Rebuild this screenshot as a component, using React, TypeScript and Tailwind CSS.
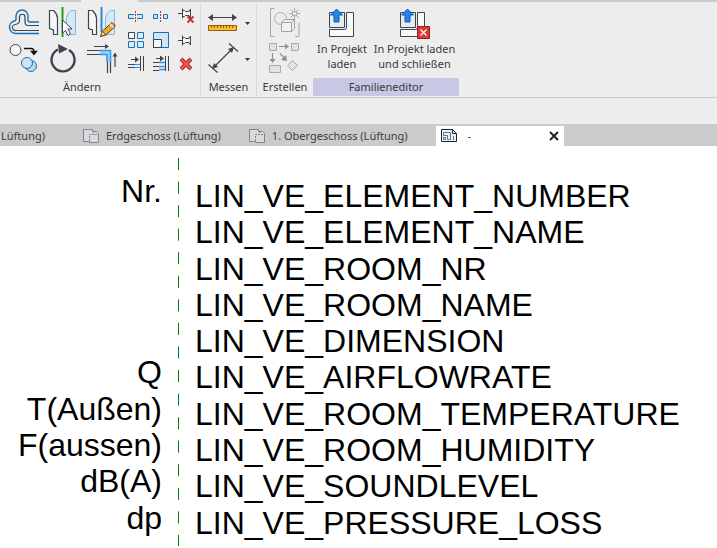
import type { ReactNode } from 'react';

type IconProps = { box: string; w: number; h: number; children: ReactNode };

const dark = '#3b4450';
const blue = '#1a6fb5';

function Icon({ box, w, h, children }: IconProps) {
  return (
    <svg viewBox={box} width={w} height={h} fill="none" aria-hidden="true">
      {children}
    </svg>
  );
}

function BigTool({ label, box, children }: { label: string; box: string; children: ReactNode }) {
  return (
    <button type="button" aria-label={label} className="h-9 w-[39px]">
      <Icon box={box} w={39} h={36}>{children}</Icon>
    </button>
  );
}

function SmallTool({ label, box, children }: { label: string; box: string; children: ReactNode }) {
  return (
    <button type="button" aria-label={label} className="h-6 w-[25px]">
      <Icon box={box} w={25} h={24}>{children}</Icon>
    </button>
  );
}

function Plates() {
  return (
    <>
      <path d="M6.5 6.500h4q3.500 3 4 7.500v16.500h-4v-4.500l-4-1.500z" fill="#f6f7f8" stroke={dark} strokeWidth="1.200" />
      <path d="M32.5 6.500h-4.500q-4 3-4.500 7.500v16.500h9z" fill="#d5e9f5" stroke="#85b9dc" />
    </>
  );
}

function ModifyPanel() {
  return (
    <section className="flex w-[200px] shrink-0 flex-col">
      <div className="flex pl-1">
        <div className="grid grid-cols-3">
          <BigTool label="Versatz" box="4 4 39 36">
            <path d="M39 22H30Q28 22 28 20V16A6 6 0 0 0 16 16V19Q16 21 14 21A6.400 6.400 0 0 0 16 33.500H39" stroke={blue} strokeWidth="1.400" />
            <path d="M39 25.500H28Q25 25.500 25 22V17A2.700 2.700 0 0 0 19.500 17V21Q19 24 15 24.500A3 3 0 0 0 16 30.500H39" stroke={dark} strokeWidth="1.200" />
          </BigTool>
          <BigTool label="Spiegeln - Achse wählen" box="0 0 39 36">
            <Plates />
            <path d="M19.500 3v30" stroke="#2a9d1c" strokeWidth="2" />
            <path d="M19.500 16v13l3-2.500 2.500 5 2.500-1.500-2.500-5h4z" fill="#fff" stroke={dark} />
          </BigTool>
          <BigTool label="Spiegeln - Achse zeichnen" box="0 0 39 36">
            <Plates />
            <path d="M19.500 3v25" stroke="#3585d0" strokeWidth="2" />
            <path d="M18.500 32.500l2-5.500 9.500-8.500 3.500 3.500-9.500 9z" fill="#f5a81f" stroke="#5a3a18" />
            <path d="M28 20l3.500 3.500" stroke="#f7e6d4" strokeWidth="1.500" />
            <path d="M18.500 32.500l2-5 3 3z" fill="#fbe9cc" stroke="#5a3a18" strokeWidth="0.800" />
          </BigTool>
          <BigTool label="Kopieren" box="4 40 39 36">
            <circle cx="15.500" cy="50" r="5.500" fill="#f7f7f7" stroke={dark} />
            <path d="M24 48.500h7q3 0 3 3v2M31.500 51.500l2.500 3 2.500-3z" stroke="#111" strokeWidth="1.300" />
            <circle cx="31" cy="66" r="5.500" fill="#b8daf1" stroke={blue} />
            <circle cx="27" cy="63" r="5.500" fill="#c9e4f6" stroke={blue} />
          </BigTool>
          <BigTool label="Drehen" box="43 40 39 36">
            <path d="M69 50A11.500 11.500 0 1 1 58 49.500" stroke={dark} strokeWidth="2.400" />
            <path d="M58 44l10 5-9 4.500z" fill={dark} />
          </BigTool>
          <BigTool label="Stutzen/Dehnen auf Ecke" box="82 40 39 36">
            <path d="M94 46.500h12M115 67V55" stroke={dark} strokeWidth="1.200" />
            <path d="M109 46.500l-4-2.500v5zM115 52.500l-2.500 4h5z" fill={dark} />
            <path d="M87 50.500h13M87 54.500h13M107.500 60v13M110.500 60v13" stroke={dark} strokeWidth="1.200" />
            <path d="M99.500 50.500h11V62h-3.500V54.500h-7.500z" fill="#9fd0f8" />
            <path d="M99.500 50.500h11V62M99.500 54.500h7.500V62" stroke="#3096ed" strokeWidth="1.500" />
          </BigTool>
        </div>
        <div className="ml-0.5 grid grid-cols-3">
          <SmallTool label="Element teilen" box="123 5 25 24">
            <path d="M128.500 15.500h14v4h-14z" fill="#cde7f7" stroke={blue} />
            <path d="M135.500 12v11" stroke="#ededed" strokeWidth="3" />
            <path d="M135.500 12v11" stroke="#b93a34" strokeDasharray="2 1" />
          </SmallTool>
          <SmallTool label="Mit Abstand teilen" box="148 5 25 24">
            <path d="M153.500 15.500h4v4h-4zM163.500 15.500h4v4h-4z" fill="#cde7f7" stroke={blue} />
            <path d="M160.500 12v11" stroke="#b93a34" strokeDasharray="2 1" />
          </SmallTool>
          <SmallTool label="Loslösen" box="173 5 25 24">
            <path d="M178 14.500h4M182.500 9.500v10M182.500 11.500h2l1 1h3.500l1.500-2.500v9l-1.500-2.500h-3.500l-1 1h-2" fill="#f4f4f4" stroke={dark} />
            <path d="M187.500 17.500l6 6M193.500 17.500l-6 6" stroke="#cb2b26" strokeWidth="1.800" />
          </SmallTool>
          <SmallTool label="Reihe" box="123 29 25 24">
            <path d="M128.500 33.500h6v6h-6z" fill="#f7f7f7" stroke={dark} />
            <path d="M137.500 33.500h6v6h-6zM128.500 42.500h6v6h-6zM137.500 42.500h6v6h-6z" fill="#dceefa" stroke={blue} />
          </SmallTool>
          <SmallTool label="Skalieren" box="148 29 25 24">
            <path d="M153.500 33.500h15v15h-15z" fill="#cde7f7" stroke={blue} />
            <path d="M153.500 40.500h8v8h-8z" fill="#f7f7f7" stroke={dark} />
          </SmallTool>
          <SmallTool label="Fixieren" box="173 29 25 24">
            <path d="M178 41.500h4M182.500 36.500v10M182.500 38.500h2l1 1h3.500l1.500-2.500v9l-1.500-2.500h-3.500l-1 1h-2" fill="#f4f4f4" stroke={dark} />
          </SmallTool>
          <SmallTool label="Einzelnes Element dehnen" box="123 53 25 24">
            <path d="M131 60.500h5M128 65.500h8M128 68.500h8M140.500 57v15M143.500 57v15" stroke={dark} />
            <path d="M139 60.500l-4-3v6z" fill={dark} />
            <path d="M135 65.500h5M135 68.500h5" stroke="#3096ed" />
          </SmallTool>
          <SmallTool label="Mehrere Elemente dehnen" box="148 53 25 24">
            <path d="M156 59.500h5M153 63.500h6M153 67.500h6M153 71.500h6M165.500 57v15M168.500 57v15" stroke={dark} />
            <path d="M164 59.500l-4-3v6z" fill={dark} />
            <path d="M159 63.500h6M159 67.500h6M159 70.500h6" stroke="#3096ed" strokeWidth="1.500" />
          </SmallTool>
          <SmallTool label="Löschen" box="173 53 25 24">
            <path d="M181 60l10 10M191 60l-10 10" stroke="#b5201d" strokeWidth="4" />
            <path d="M181.500 60.500l9 9M190.500 60.500l-9 9" stroke="#ef5a50" strokeWidth="2.200" />
          </SmallTool>
        </div>
      </div>
      <h2 className="mr-9 mt-0.5 text-center leading-[18px]">Ändern</h2>
    </section>
  );
}

function MeasurePanel() {
  return (
    <section className="flex w-14 shrink-0 flex-col border-l border-[#d9d9d9]">
      <button type="button" aria-label="Messen zwischen zwei Referenzen" className="h-9">
        <Icon box="201 4 55 36" w={55} h={36}>
          <path d="M210 17.500h25" stroke={dark} />
          <path d="M208 17.500l5-3.500v7zM237 17.500l-5-3.500v7z" fill={dark} />
          <path d="M208.500 25.500h28v5h-28z" fill="#f5c02c" stroke="#9a5a10" />
          <path d="M211.500 26v2M214.500 26v2M217.500 26v2M220.500 26v2M223.500 26v2M226.500 26v2M229.500 26v2M232.500 26v2" stroke="#9a5a10" />
          <path d="M245 22h5l-2.500 3z" fill="#333" />
        </Icon>
      </button>
      <button type="button" aria-label="Ausgerichtete Bemaßung" className="h-9">
        <Icon box="201 40 55 36" w={55} h={36}>
          <path d="M214 67l18-18M208.500 64.500l9 8M229 43.500l9 8" stroke={dark} strokeWidth="1.200" />
          <path d="M212 69l2-6 4 4zM234 47l-6 2 4 4z" fill={dark} />
          <path d="M245 58h5l-2.500 3z" fill="#333" />
        </Icon>
      </button>
      <h2 className="mt-0.5 text-center leading-[18px]">Messen</h2>
    </section>
  );
}

function CreatePanel() {
  return (
    <section className="flex w-[57px] shrink-0 flex-col border-l border-[#d9d9d9]">
      <button type="button" aria-label="Gruppe erstellen" className="h-9">
        <Icon box="257 4 56 36" w={56} h={36}>
          <path d="M274.500 8.500h-4v28h4M295 36.500h4v-14" stroke="#a6a6a6" />
          <circle cx="280.500" cy="18.500" r="6" fill="#ececec" stroke="#b0b0b0" />
          <path d="M281.500 22.500l3-3h10v9l-3 3h-10zM281.500 22.500h10v9M291.500 22.500l3-3" fill="#f1f1f1" stroke="#a0a0a0" />
          <path d="M294.500 8v11M289 13.500h11M290.500 9.500l8 8M298.500 9.500l-8 8" stroke="#a6a6a6" />
          <circle cx="294.500" cy="13.500" r="2" fill="#f4f4f4" stroke="#a6a6a6" />
        </Icon>
      </button>
      <button type="button" aria-label="Ähnliches erstellen" className="h-9">
        <Icon box="257 40 56 36" w={56} h={36}>
          <path d="M269.500 43.500h7v7h-7zM291.500 43.500h7v7h-7zM269.500 65.500h11v7h-11zM292.500 60.500l5 5-5 5-5-5z" fill="#e2e2e2" stroke="#aaa" />
          <path d="M279 46.500h7M272.500 53v6M280 53.500l5 5" stroke="#909090" strokeWidth="1.200" />
          <path d="M289 46.500l-4-3v6zM272.500 63l-3-4h6zM287 61l-6-1 5-5z" fill="#909090" />
        </Icon>
      </button>
      <h2 className="mt-0.5 text-center leading-[18px]">Erstellen</h2>
    </section>
  );
}

function LoadIcon({ close }: { close?: boolean }) {
  return (
    <Icon box={close ? '0 0 36 34' : '0 0 32 34'} w={close ? 36 : 32} h={34}>
      <path d="M3.500 6.500h15v15h-15z" fill="#e8eaec" stroke={dark} />
      <path d="M20.500 6.500h7v24h-24v-7h15q2 0 2-2z" fill="#f8f9fa" stroke={dark} />
      <path d="M10.500 3l6 6h-3.500v7h-5v-7h-3.500z" fill="#1f86ee" stroke="#0e5aa8" />
      {close && (
        <>
          <path d="M20.500 20.500h12v12h-12z" fill="#d93a36" stroke="#9c1d1a" />
          <path d="M23.500 23.500l6 6M29.500 23.500l-6 6" stroke="#fff" strokeWidth="1.200" />
        </>
      )}
    </Icon>
  );
}

function FamilyPanel() {
  return (
    <section className="flex w-[146px] shrink-0 flex-col">
      <div className="flex h-[74px] pt-0.5">
        <button type="button" className="flex w-[58px] flex-col items-center justify-start whitespace-nowrap leading-[15px]">
          <LoadIcon />
          <span className="pt-px">In Projekt<br />laden</span>
        </button>
        <button type="button" className="flex w-[87px] flex-col items-center justify-start whitespace-nowrap leading-[15px]">
          <LoadIcon close />
          <span className="pt-px">In Projekt laden<br />und schließen</span>
        </button>
      </div>
      <h2 className="bg-[#c8c8e4] text-center leading-[18px]">Familieneditor</h2>
    </section>
  );
}

function PlanIcon() {
  return (
    <Icon box="0 0 17 15" w={17} h={15}>
      <path d="M.5.500h9v2h4l2 2v9h-9v-1h-6z" fill="#d9dadd" stroke="#80848c" />
      <path d="M6.500 12V5.500h9M10.500 2v3.500" stroke="#80848c" strokeDasharray="2 1" />
    </Icon>
  );
}

const views = ['Erdgeschoss (Lüftung)', '1. Obergeschoss (Lüftung)'];

function ViewTabs() {
  return (
    <nav className="flex h-[22px] overflow-hidden bg-[#cbcbcb] text-[#3c3c3c]">
      <button type="button" className="flex w-[83px] shrink-0 items-center justify-end pr-[38px] pt-0.5">Lüftung)</button>
      {views.map((view) => (
        <button key={view} type="button" className="mr-6 flex shrink-0 items-center gap-1.5 whitespace-nowrap pr-1 pt-0.5">
          <PlanIcon />
          {view}
        </button>
      ))}
      <div className="mt-0.5 flex w-32 shrink-0 items-center justify-between bg-white px-[5px]">
        <button type="button" className="flex items-center gap-2.5">
          <Icon box="0 0 17 14" w={17} h={14}>
            <path d="M.5.500h11l4 4v8h-15z" fill="#eef2f6" stroke="#20262e" />
            <path d="M11.500.500v4h4" stroke="#20262e" />
            <path d="M2.500 3.500h7v7h-3v-4h-4zM2.500 8.500h2v2h-2zM12.500 7v4" stroke="#61738d" />
          </Icon>
          -
        </button>
        <button type="button" aria-label="Schließen">
          <Icon box="0 0 10 10" w={10} h={10}>
            <path d="M1 1l8 8M9 1l-8 8" stroke="#222" strokeWidth="2" />
          </Icon>
        </button>
      </div>
    </nav>
  );
}

const rows = [
  { label: 'Nr.', parameter: 'LIN_VE_ELEMENT_NUMBER' },
  { label: '', parameter: 'LIN_VE_ELEMENT_NAME' },
  { label: '', parameter: 'LIN_VE_ROOM_NR' },
  { label: '', parameter: 'LIN_VE_ROOM_NAME' },
  { label: '', parameter: 'LIN_VE_DIMENSION' },
  { label: 'Q', parameter: 'LIN_VE_AIRFLOWRATE' },
  { label: 'T(Außen)', parameter: 'LIN_VE_ROOM_TEMPERATURE' },
  { label: 'F(aussen)', parameter: 'LIN_VE_ROOM_HUMIDITY' },
  { label: 'dB(A)', parameter: 'LIN_VE_SOUNDLEVEL' },
  { label: 'dp', parameter: 'LIN_VE_PRESSURE_LOSS' },
];

function Drawing() {
  return (
    <main className="flex flex-1 gap-4 overflow-hidden bg-white font-['Liberation_Sans',Arial,sans-serif] text-[32px] leading-9 text-black">
      <ul className="grid w-[162px] shrink-0 auto-rows-fr pb-3 pt-[27px] text-right">
        {rows.map((row) => (
          <li key={row.parameter}>{row.label}</li>
        ))}
      </ul>
      {/* Referenzebene */}
      <div className="relative mb-0.5 mt-3 w-px shrink-0">
        <svg className="absolute h-full w-px" aria-hidden="true">
          <line x1="0.5" y1="0" x2="0.5" y2="100%" stroke="#008000" strokeDasharray="12 11.56" />
        </svg>
      </div>
      <ul className="grid auto-rows-fr whitespace-nowrap pb-[7px] pt-8">
        {rows.map((row) => (
          <li key={row.parameter}>{row.parameter}</li>
        ))}
      </ul>
    </main>
  );
}

export default function App() {
  return (
    <div className="flex min-h-screen flex-col overflow-hidden bg-[#ededed] font-['Noto_Sans','Open_Sans',sans-serif] text-[11px] text-[#3a3a3a]">
      <div className="flex h-0.5">
        <div className="w-[81px] bg-[#cbcbcb]" />
        <div className="w-[57px]" />
        <div className="flex-1 bg-[#cbcbcb]" />
      </div>
      <header className="flex border-b border-[#cbcbcb] pb-px pt-0.5">
        <ModifyPanel />
        <MeasurePanel />
        <CreatePanel />
        <FamilyPanel />
      </header>
      <div className="h-[26px]" />
      <ViewTabs />
      <Drawing />
    </div>
  );
}
